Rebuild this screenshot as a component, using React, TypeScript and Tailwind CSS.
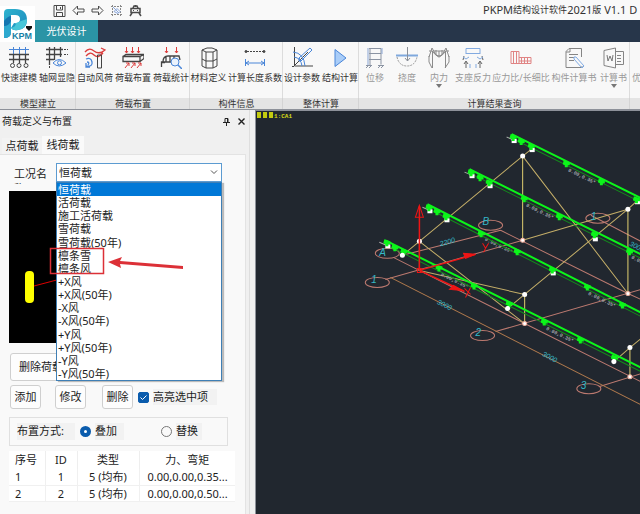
import { useState } from "react";
import type { ReactNode } from "react";

const LOAD_CASES = [
  "恒荷载", "活荷载", "施工活荷载", "雪荷载", "雪荷载(50年)", "檩条雪", "檩条风",
  "+X风", "+X风(50年)", "-X风", "-X风(50年)", "+Y风", "+Y风(50年)", "-Y风", "-Y风(50年)",
];

const K = "#444";
const B = "#4a86d8";
const R = "#dc3c3c";

function Icon({ children }: { children: ReactNode }) {
  return (
    <svg viewBox="0 0 22 22" className="h-[22px] w-[22px] shrink-0" fill="none" stroke={K} strokeWidth="1" aria-hidden="true">
      {children}
    </svg>
  );
}

const icons = {
  model: (
    <Icon>
      <path d="M5.500 0v16M11.500 0v16M17.500 0v16M1 2.500h20" stroke={B} />
      <path d="M1 7.500h20M1 12.500h20M5.500 8v8M11.500 8v8M17.500 8v8" strokeWidth="1.300" />
      <circle cx="4.500" cy="18.500" r="2" /><circle cx="11" cy="18.500" r="2" /><circle cx="18" cy="18.500" r="2" />
    </Icon>
  ),
  grid: (
    <Icon>
      <path d="M3.500 0v18M8.500 0v13M14.500 0v10M0 2.500h17M0 7.500h16M0 12.500h8" strokeWidth="1.300" />
      <path d="M18 2.500h4M18 7.500h4M3.500 19v3" strokeDasharray="2 1" />
      <path d="M7 16q6-7 13 0q-7 6-13 0Z" stroke={B} fill="#f8f8f8" />
      <circle cx="13.500" cy="15.800" r="2" stroke={B} />
    </Icon>
  ),
  wind: (
    <Icon>
      <path d="M1 5q4-5 9-1t11-1M2 9q4-5 8-1t9-2M17 1l4 2-4 3" stroke={R} strokeWidth="1.300" />
      <path d="M13.500 8h4v13h-4z" />
      <path d="M2 12q5-2 6 3t-6 4M3 15q3 0 1 3M2 16v4h4" stroke={B} strokeWidth="1.300" />
    </Icon>
  ),
  load: (
    <Icon>
      <path d="M4.500 0v6M10.500 0v6M16.500 0v6M3 4l1.500 2L6 4M9 4l1.500 2L12 4M15 4l1.500 2L18 4" stroke={R} />
      <path d="M1 9.500h17v5H1zM1 9.500l3-2h18l-4 2M22 7.500v4l-4 3" strokeWidth="1.300" />
      <path d="M3 21l4-5M9 21l4-5M15 21l4-5M4 16h3v3M10 16h3v3M16 16h3v3" stroke={R} />
    </Icon>
  ),
  stat: (
    <Icon>
      <path d="M6.500 0v6M16.500 0v6M5 4l1.500 2L8 4M15 4l1.500 2L18 4" stroke={R} />
      <path d="M1.500 20v-5h11M3 15q0-6 5-6h11l1 4M6 10v5M10 9v6M14 9v3M1 15.500h4" strokeWidth="1.300" />
      <circle cx="15" cy="15" r="4" stroke={B} fill="#eaf2fc" /><path d="M18 18l4 4" stroke={B} strokeWidth="1.500" />
    </Icon>
  ),
  material: (
    <Icon>
      <path d="M4 3l5-2h5l5 2v16l-4 2H8l-4-2zM4 3l4 2h7l4-2M8 5v16M15 5v16M4 12l4 2h7l4-2" />
    </Icon>
  ),
  length: (
    <Icon>
      <path d="M3 4.500h17" strokeDasharray="2 1" /><circle cx="2" cy="4.500" r="1" fill={K} /><circle cx="20" cy="4.500" r="1" fill={K} />
      <path d="M1.500 12v7M20.500 12v7M2 16h18M5 14l-3 2 3 2M17 14l3 2-3 2" stroke={B} />
    </Icon>
  ),
  design: (
    <Icon>
      <path d="M3.500 0v19H22M1 19.500h2M3 19L17 5" />
      <path d="M2 5q11 1 12 14M3 10q7 1 8 9M8 11L19 1l2 2L10 14zM8 11v3h2" stroke={B} />
    </Icon>
  ),
  run: (
    <Icon><path d="M6 2.500v17L17 11z" stroke={B} fill="#a9cdf8" /></Icon>
  ),
  shift: (
    <Icon>
      <g stroke="#8b94a3"><path d="M5 1.500h12v16M6 1v17M5 6.500h12M5 12.500h12M2 18.500h6M14 18.500h6M2 21l2-2M5 21l2-2M14 21l2-2M17 21l2-2" /><path d="M4 1v17M18 1v6" stroke="#8ba6d4" /></g>
    </Icon>
  ),
  bend: (
    <Icon>
      <path d="M0 8.500h22" stroke="#7fa8dd" strokeWidth="2" /><path d="M11.500 0v14M9 11l2.500 3 2.500-3" stroke="#8a8f98" />
      <path d="M1 10q2 9 10 9t10-9" stroke="#999" strokeDasharray="2 1" />
    </Icon>
  ),
  force: (
    <Icon>
      <path d="M4.500 21V4h13v17M1 4h3M18 4h3M4 4q7 10 14 0M1 10l3-9 4 7q3 4 6 0l4-7 3 9M1 9v6l3 6M21 9v6l-4 6M8 3v5M14 3v5M11 4v6" stroke="#8b8b8b" />
    </Icon>
  ),
  reaction: (
    <Icon>
      <path d="M4 7V1.500h14V7M4 6.500h14" stroke="#82aae0" />
      <path d="M4 21v-6M18 21v-6M2 17l2-3 2 3M16 17l2-3 2 3M2 9l-1 4M20 9l1 4" stroke="#666" />
      <path d="M1 10l3 2 3-2M15 10l3 2 3-2M8 17v4M14 17v4" stroke="#82aae0" />
    </Icon>
  ),
  ratio: (
    <Icon>
      <path d="M1 4.500h8v12H1zM9 10.500h12v6H9M3.500 5v12M6.500 5v12M11.500 11v6M14.500 11v6M17.500 11v6M9 14h12" stroke="#e08484" />
    </Icon>
  ),
  report: (
    <Icon>
      <path d="M18.500 10V1.500H6l-3 3v16h16V19M3 5h4V1M6 7.500h9M6 10.500h5M6 13.500h5" stroke="#858585" />
      <path d="M11 10h2l8 9-2 2-8-9z" stroke="#7faae4" />
    </Icon>
  ),
  word: (
    <Icon>
      <path d="M12.500 1v20L1 18.500V3.500zM13 4.500h7.500v13H13M14 8.500h4M14 11.500h4M14 14.500h4" stroke="#858585" />
      <path d="M4 8l1 6 2-5 2 5 1-6" stroke="#777" />
    </Icon>
  ),
};

type Tool = { label: string; icon: ReactNode; w: string; menu?: boolean };
type Group = { name: string; off?: boolean; tools: Tool[] };

const GROUPS: Group[] = [
  { name: "模型建立", tools: [
    { label: "快速建模", icon: icons.model, w: "w-[38px]" },
    { label: "轴网显隐", icon: icons.grid, w: "w-[38px]" },
  ] },
  { name: "荷载布置", tools: [
    { label: "自动风荷", icon: icons.wind, w: "w-[38px]" },
    { label: "荷载布置", icon: icons.load, w: "w-[38px]" },
    { label: "荷载统计", icon: icons.stat, w: "w-[38px]" },
  ] },
  { name: "构件信息", tools: [
    { label: "材料定义", icon: icons.material, w: "w-[37px]" },
    { label: "计算长度系数", icon: icons.length, w: "w-[56px]" },
  ] },
  { name: "整体计算", tools: [
    { label: "设计参数", icon: icons.design, w: "w-[38px]" },
    { label: "结构计算", icon: icons.run, w: "w-[38px]" },
  ] },
  { name: "计算结果查询", off: true, tools: [
    { label: "位移", icon: icons.shift, w: "w-[32px]" },
    { label: "挠度", icon: icons.bend, w: "w-[32px]" },
    { label: "内力", icon: icons.force, w: "w-[32px]", menu: true },
    { label: "支座反力", icon: icons.reaction, w: "w-[36px]" },
    { label: "应力比/长细比", icon: icons.ratio, w: "w-[60px]" },
    { label: "构件计算书", icon: icons.report, w: "w-[46px]" },
    { label: "计算书", icon: icons.word, w: "w-[33px]", menu: true },
  ] },
];

function Logo() {
  return (
    <svg viewBox="0 0 35 36" className="h-9 w-[35px] bg-white" role="img" aria-label="PKPM">
      <defs>
        <linearGradient id="bowl" x1="0" y1="0" x2="1" y2="1">
          <stop offset="0" stopColor="#2fb4cf" /><stop offset="1" stopColor="#1b86bb" />
        </linearGradient>
      </defs>
      <path d="M4 7q0-4 4-4h7q12 0 12 11 0 9-9 10-5 1-7-2l3-5q6 1 6-4 0-4-5-4H11v10L4 28z" fill="url(#bowl)" />
      <path d="M4 15q4-5 7-5v16q0 6-7 6z" fill="#1576b0" />
      <path d="M4 20q5 0 7-5v11q0 6-7 6z" fill="#2ea9cf" />
      <path d="M11 22q5-1 5-5l5-2 6-2q0 10-9 11-5 1-7-2z" fill="#48c6d8" />
      <text x="12" y="33" fontFamily="Liberation Sans, sans-serif" fontWeight="700" fontSize="9" fill="#187fa6">KPM</text>
      <path d="M26 20h6v2l-3 3-3-3z" fill="#111" />
    </svg>
  );
}

const QUICK: { label: string; art: ReactNode }[] = [
  { label: "保存", art: <path d="M1 1.500h11v11H1zM3.500 2v4h6V2M3.500 12V8.500h6V12M7.500 3v2" /> },
  { label: "撤销", art: <path d="M1 6.500L5.500 2v3H12v3H5.500v3z" /> },
  { label: "重做", art: <path d="M12 6.500L7.500 2v3H1v3h6.500v3z" /> },
  { label: "框选", art: <><path d="M2.500 1v11M10.500 1v11M1 2.500h11M1 10.500h11" strokeDasharray="2 1" stroke="#888" /><path d="M3 3l6 6M4 7.500l3-3 3 3-2 2z" stroke="#8aa7dc" /></> },
  { label: "查找", art: <><path d="M2 4.500h9v4H2zM4 4l1-2h3l1 2M3 9l-2 3M10 9l2 3M6.500 1v2" strokeWidth="1.500" /><path d="M4 6.500h1M8 6.500h1" /></> },
];

function Header() {
  return (
    <header className="flex bg-[#f9f9f9]">
      <div className="flex w-[35px] shrink-0 items-end"><Logo /></div>
      <div className="min-w-0 flex-1">
        <div className="flex h-5 items-center pl-[18px]">
          <div className="flex gap-[6px]">
            {QUICK.map((q) => (
              <button key={q.label} aria-label={q.label} className="h-[13px] w-[13px]">
                <svg viewBox="0 0 13 13" className="h-[13px] w-[13px]" fill="none" stroke="#4a4a4a">{q.art}</svg>
              </button>
            ))}
          </div>
          <h1 className="ml-auto flex w-[157px] items-center overflow-hidden whitespace-nowrap text-[11px] leading-5 text-[#333]">
            PKPM<span className="text-[9px]">结构设计软件</span>2021<span className="text-[9px]">版</span>&nbsp;V1.1 D
          </h1>
        </div>
        <nav className="flex h-[22px] bg-[#27364a]">
          <button className="w-[63px] bg-[#2b94a5] text-[10px] text-white">光伏设计</button>
        </nav>
      </div>
    </header>
  );
}

function Caret() {
  return <svg viewBox="0 0 6 4" className="h-1 w-[6px]" aria-hidden="true"><path d="M0 0h6L3 4z" fill="#777" /></svg>;
}

function Ribbon() {
  return (
    <div className="flex overflow-hidden border-b border-[#8d9199] bg-[#f8f8f8] text-[9px]">
      {GROUPS.map((g) => (
        <section key={g.name} className="shrink-0">
          <div className="flex h-14 pt-[5px] shadow-[inset_-1px_0_#dcdcdc]">
            {g.tools.map((t) => (
              <button
                key={t.label}
                disabled={g.off}
                className={`flex flex-col items-center whitespace-nowrap text-[#333] disabled:text-[#999] ${t.w}`}
              >
                {t.icon}
                <span className="mt-[2px] leading-[13px]">{t.label}</span>
                {t.menu && <Caret />}
              </button>
            ))}
          </div>
          <h2 className="h-[11px] bg-[#e4e4e4] text-center leading-[11px] text-[#333] shadow-[inset_-1px_0_#d4d4d4]">{g.name}</h2>
        </section>
      ))}
      <section className="min-w-0 flex-1">
        <div className="h-14 overflow-hidden pt-[5px]">
          <button disabled className="whitespace-nowrap pl-[2px] pt-6 leading-[13px] text-[#999]">优化</button>
        </div>
        <div className="h-[11px] bg-[#e4e4e4]" />
      </section>
    </div>
  );
}

const BTN = "rounded-[3px] border border-[#cfcfcf] bg-[#fdfdfd]";
const RADIO = "h-[11px] w-[11px] shrink-0 appearance-none rounded-full border border-[#777] checked:border-[4px] checked:border-[#0b5cad] checked:bg-white";

function CaseSelect() {
  const [value, setValue] = useState(LOAD_CASES[0]);
  return (
    <div className="relative w-[166px]">
      <select
        id="load-case"
        value={value}
        onChange={(e) => setValue(e.target.value)}
        className="block h-[19px] w-full appearance-none border border-[#5c9bd1] bg-white pl-[2px] text-[11px] leading-4 outline-none"
      >
        {LOAD_CASES.map((c) => <option key={c}>{c}</option>)}
      </select>
      <svg viewBox="0 0 8 5" className="pointer-events-none absolute right-1 top-[7px] h-[5px] w-2" fill="none" stroke="#555"><path d="M1 .5l3 3 3-3" /></svg>
      <ul role="listbox" aria-label="工况名称" className="absolute left-0 top-[19px] z-10 grid h-[199px] w-full auto-rows-fr border border-[#3f7fb5] bg-white text-[11px] shadow-[2px_1px_1px_#bbb]">
        {LOAD_CASES.map((c) => (
          <li
            key={c}
            role="option"
            aria-selected={c === value}
            onClick={() => setValue(c)}
            className="flex items-center pl-px leading-[13px] aria-selected:bg-[#0078d7] aria-selected:text-white"
          >
            {c}
          </li>
        ))}
      </ul>
      <svg viewBox="0 0 140 30" className="pointer-events-none absolute -left-[7px] top-[84px] z-20 h-[30px] w-[140px]" aria-hidden="true">
        <path d="M1.500 1.500h53v25h-53z" fill="none" stroke="#dc3037" strokeWidth="1.500" />
        <path d="M59 15l14-5-2 4 63 5v3L71 17l1 4z" fill="#dc3037" />
      </svg>
    </div>
  );
}

function Panel() {
  const [mode, setMode] = useState("add");
  return (
    <aside className="flex w-[250px] shrink-0 flex-col border-r border-[#dedede] bg-[#f0f0f0] text-[11px] text-[#1c1c1c]">
      <div className="flex h-[22px] items-center pl-[2px] text-[10px]">
        <h2>荷载定义与布置</h2>
        <button aria-label="固定" className="ml-auto h-[9px] w-[7px]">
          <svg viewBox="0 0 7 9" fill="none" stroke="#222"><path d="M2 1.500h3v4H2zM0 5.500h7M3.500 6v3M4.500 1v4" /></svg>
        </button>
        <button aria-label="关闭" className="ml-2 mr-1 h-[7px] w-[7px]">
          <svg viewBox="0 0 7 7" stroke="#222" strokeWidth="1.400"><path d="M.5.5l6 6M6.500.5l-6 6" /></svg>
        </button>
      </div>
      <div role="tablist" className="flex h-[22px] items-end pl-[2px]">
        <button role="tab" aria-selected="false" className="h-4 w-10 bg-[#f3f3f3] leading-4">点荷载</button>
        <button role="tab" aria-selected="true" className="h-[18px] w-[42px] bg-[#fafafa] leading-4">线荷载</button>
      </div>
      <div className="mr-[3px] flex-1 overflow-hidden border-r border-t border-[#e3e3e3] bg-[#f9f9f9] pl-[9px] pt-2">
        <div className="flex h-7">
          <label htmlFor="load-case" className="mt-[3px] h-[18px] w-[47px] overflow-hidden pl-[5px] pr-[6px] leading-[15px]">工况名称</label>
          <CaseSelect />
        </div>
        <svg viewBox="0 0 208 152" className="h-[152px] w-[208px] bg-black" role="img" aria-label="荷载预览">
          <path d="M25 95L180 54" stroke="#d00" />
          <rect x="16" y="80" width="9" height="32" rx="4" fill="#ff0" />
        </svg>
        <div className="ml-px mt-[10px] flex gap-[2px]">
          <button className={`${BTN} h-7 w-[62px]`}>删除荷载</button>
          <button aria-label="清空" className="h-7 w-[62px] rounded-[3px] border border-[#5c9bd1] bg-[#fdfdfd]" />
        </div>
        <div className="ml-px mt-1 flex items-center">
          <button className={`${BTN} h-6 w-[31px]`}>添加</button>
          <button className={`${BTN} ml-[14px] h-6 w-[31px]`}>修改</button>
          <button className={`${BTN} ml-4 h-6 w-[31px]`}>删除</button>
          <label className="ml-[5px] flex items-center">
            <span className="relative flex">
              <input type="checkbox" defaultChecked className="peer h-[11px] w-[11px] appearance-none rounded-[2px] border border-[#0b5cad] checked:bg-[#0b5cad]" />
              <svg viewBox="0 0 11 11" className="pointer-events-none absolute left-0 top-0 hidden h-[11px] w-[11px] peer-checked:block" fill="none" stroke="#fff"><path d="M2.500 5.500l2 2 4-4" /></svg>
            </span>
            <span className="ml-1 w-[64px] bg-[#f2f2f2]">高亮选中项</span>
          </label>
        </div>
        <fieldset className="mt-2 flex h-[29px] w-[219px] items-center border border-[#e0e0e0] pl-[7px]">
          <span className="w-[58px] bg-[#f2f2f2]">布置方式:</span>
          <label className="ml-[5px] flex w-[44px] items-center gap-1">
            <input type="radio" name="mode" checked={mode === "add"} onChange={() => setMode("add")} className={RADIO} />
            <span className="w-[29px] shrink-0 bg-[#f2f2f2]">叠加</span>
          </label>
          <label className="ml-[37px] flex items-center gap-1">
            <input type="radio" name="mode" checked={mode === "swap"} onChange={() => setMode("swap")} className={RADIO} />
            <span className="w-[26px] shrink-0 bg-[#f2f2f2]">替换</span>
          </label>
        </fieldset>
        <table className="mt-[5px] w-[226px] table-fixed bg-white text-center">
          <colgroup><col className="w-[36px]" /><col className="w-[32px]" /><col className="w-[62px]" /><col /></colgroup>
          <thead>
            <tr className="h-[18px] leading-4">
              <th className="border-r border-[#eee] pl-[6px] text-left font-normal">序号</th>
              <th className="border-r border-[#eee] font-normal">ID</th>
              <th className="border-r border-[#eee] font-normal">类型</th>
              <th className="font-normal">力、弯矩</th>
            </tr>
          </thead>
          <tbody>
            {["0.00,0.00,0.35...", "0.00,0.00,0.50..."].map((v, i) => (
              <tr key={v} className="h-4 border-b border-[#f0f0f0] leading-[15px]">
                <td className="border-r border-[#f0f0f0] pl-[6px] text-left">{i + 1}</td>
                <td className="border-r border-[#f0f0f0]">{i + 1}</td>
                <td className="border-r border-[#f0f0f0]">5 (均布)</td>
                <td className="pl-2 text-left">{v}</td>
              </tr>
            ))}
          </tbody>
        </table>
      </div>
    </aside>
  );
}

const PURLINS = ["M511 135L640 199", "M469 170L640 255", "M427 205L640 313", "M385 241L640 368"];
const CLIPS = [
  [513, 138], [521, 142], [531, 147], [566, 164], [601, 182], [636, 200],
  [471, 173], [480, 178], [489, 183], [524, 199], [559, 217], [594, 235], [629, 252],
  [429, 208], [437, 212], [446, 217], [481, 234], [517, 252], [552, 270], [587, 287], [622, 305],
  [387, 243], [395, 248], [404, 252], [439, 268], [474, 286], [509, 304], [544, 322], [580, 340], [614, 358],
];
const CLAMPS = [[513, 141], [531, 150], [471, 176], [489, 186], [429, 211], [446, 220], [387, 246], [552, 273], [594, 239], [636, 202]];
const NODES = [[522, 157], [419, 242], [402, 256], [524, 295], [507, 309], [627, 210], [629, 348], [613, 362]];
const BASES = [[522, 241], [524, 324], [627, 294], [629, 377]];
const TAGS = [[567, 172], [525, 207], [630, 259], [484, 241], [587, 295], [440, 276], [545, 330]];
const BUBBLES = [[387, 254], [377, 283], [490, 226], [597, 219], [482, 336], [588, 389]];

function Viewport() {
  return (
    <main className="min-w-0 flex-1 border-l border-t border-[#8d9199] bg-[#21272f]">
      <svg viewBox="256 112 384 402" preserveAspectRatio="xMinYMin slice" className="block h-full w-full" fill="none" role="img" aria-label="三维模型">
        <path d="M257 113h4v6h-4zM263 113h4v6h-4zM269 113h4v6h-4z" fill="#c4cc10" />
        <text x="274" y="119" fontFamily="Liberation Mono, monospace" fontSize="6" fontWeight="700" fill="#d5dc18">1:CA1</text>
        <g stroke="#bd7a70">
          <path d="M385 280L522 241M393 258L524 324L640 382M402 256L500 231M500 231L627 294L640 300M495 332L640 290M598 387L640 374M590 216L640 242" />
          {BUBBLES.map(([x, y]) => <ellipse key={x} cx={x} cy={y} rx="12" ry="5" />)}
        </g>
        <path d="M390 278L640 405" stroke="#b57c4e" />
        <g stroke="#c4ae68">
          <path d="M402 256L419 242L522 157L532 149M507 309L524 295L627 210L637 201M613 362L629 348L640 339" />
          <path d="M522 157L627 294M522 241L627 210M419 242L524 324M419 271L524 295" />
          <path d="M522 157V241M419 242V271M524 295V324M627 210V294M629 348V377" stroke="#e0cf70" />
        </g>
        {TAGS.map(([x, y]) => (
          <text key={x} x={x} y={y} transform={`rotate(26 ${x} ${y})`} fontFamily="Liberation Mono, monospace" fontSize="5" fontWeight="700" fill="#a4a9ae">0.00,0.35*</text>
        ))}
        <path d="M506 138l7 3M464 173l7 3M422 208l7 3M379 243l7 3" stroke="#aaa" />
        <path d="M513 140L640 203M471 175L640 259M429 210L640 317M387 246L640 372" stroke="#148a1c" />
        <g stroke="#0cf51a" strokeWidth="2">{PURLINS.map((d) => <path key={d} d={d} />)}</g>
        {CLAMPS.map(([x, y]) => <rect key={x + y} x={x - 2} y={y - 1} width="5" height="4" fill="#fff" />)}
        {CLIPS.map(([x, y]) => <path key={`${x}-${y}`} d={`M${x - 3} ${y - 3}l6 2v3h-2v2h-3v-2l-2-1z`} fill="#0cf51a" />)}
        {NODES.map(([x, y]) => <circle key={x} cx={x} cy={y} r="2.500" fill="#fff" />)}
        {BASES.map(([x, y]) => <circle key={x} cx={x} cy={y} r="2" fill="#fff" stroke="#efb0a0" />)}
        <g stroke="#ee1515">
          <path d="M419 271V207M419 271L475 255M419 271L464 292" strokeWidth="1.500" />
          <path d="M419 206l-4 12h8zM417 269h4v4h-4zM482 244l3 5 3-5M485 249l-2 4M464 289l6 6M470 288l-5 10" />
          <path d="M475 255l-12-1 2 5zM462 291l-9-5-4 4z" fill="#ee1515" />
        </g>
        <g fontFamily="Liberation Sans, sans-serif" fontStyle="italic" fontSize="10" fill="#35b9c8">
          <text x="379" y="257">A</text><text x="371" y="284">1</text><text x="482" y="226">B</text>
          <text x="590" y="221">1</text><text x="475" y="336">2</text><text x="580" y="389">3</text>
          <g fontSize="7">
            <text x="440" y="247" transform="rotate(-16 440 247)">2200</text>
            <text x="436" y="304" transform="rotate(27 436 304)">3000</text>
            <text x="541" y="356" transform="rotate(27 541 356)">3000</text>
            <text x="628" y="246" transform="rotate(27 628 246)">3000</text>
          </g>
        </g>
      </svg>
    </main>
  );
}

export default function App() {
  return (
    <div className="flex h-screen flex-col overflow-hidden bg-[#f0f0f0] font-['Noto_Sans','Noto_Sans_CJK_SC',sans-serif]">
      <Header />
      <Ribbon />
      <div className="flex min-h-0 flex-1 gap-[5px]">
        <Panel />
        <Viewport />
      </div>
    </div>
  );
}
